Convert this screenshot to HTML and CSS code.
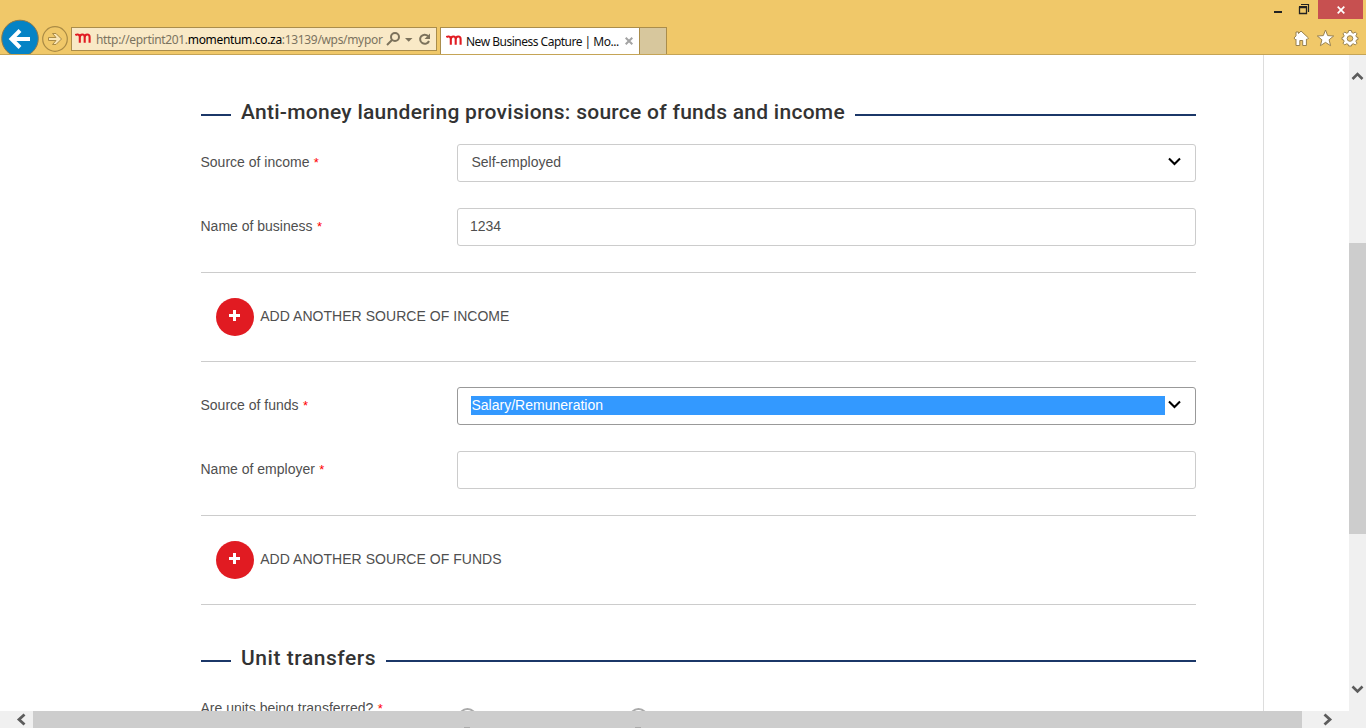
FILE: index.html
```html
<!DOCTYPE html>
<html lang="en">
<head>
<meta charset="utf-8">
<title>New Business Capture | Momentum</title>
<link rel="stylesheet" href="styles.css">
</head>
<body>
<div class="window">
  <header class="chrome">
    <div class="nav">
      <svg class="nav-icons" width="71" height="54" viewBox="0 0 71 54">
        <circle cx="20" cy="38.5" r="18.3" fill="#0583c5" stroke="#8d7a4c" stroke-width="1"/>
        <path d="M30 39H12M20 30.500L11.500 39L20 47.500" fill="none" stroke="#fff" stroke-width="4"/>
        <circle cx="55" cy="39" r="12.300" fill="none" stroke="#aa8b45" stroke-width="1.200"/>
        <path d="M48.500 37.500H56L52.500 33.500H56L61.500 39L56 44.500H52.500L56 40.500H48.500Z" fill="#fae5b5" stroke="#aa8b45" stroke-width="1"/>
      </svg>
      <div class="address">
        <svg class="fav" width="17" height="11" viewBox="0 0 17 11"><path d="M.3 2.200Q1.500 1.200 3 1.500Q4.800 1.800 4.800 4V9.800M4.800 4.500Q5 1.500 7.300 1.500Q9.700 1.500 9.700 4V9.800M9.700 4.500Q9.900 1.500 12.200 1.500Q14.600 1.500 14.600 4V9.800" fill="none" stroke="#e11b22" stroke-width="2.100"/></svg>
        <span class="url">http://eprtint201.<b>momentum.co.za</b>:13139/wps/mypor</span>
        <svg class="tools" width="50" height="16" viewBox="0 0 50 16">
          <g fill="none" stroke="#7c725b" stroke-width="2"><circle cx="9" cy="6" r="4"/><path d="M6 9L1 14"/>
          <path d="M42 5A4.600 4.600 0 1 0 43 10"/></g>
          <path d="M19 7H26.500L22.700 10.800ZM44 2.500V8H38.500Z" fill="#7c725b"/>
        </svg>
      </div>
      <div class="tab">
        <svg class="fav" width="17" height="11" viewBox="0 0 17 11"><path d="M.3 2.200Q1.500 1.200 3 1.500Q4.800 1.800 4.800 4V9.800M4.800 4.500Q5 1.500 7.300 1.500Q9.700 1.500 9.700 4V9.800M9.700 4.500Q9.900 1.500 12.200 1.500Q14.600 1.500 14.600 4V9.800" fill="none" stroke="#e11b22" stroke-width="2.100"/></svg>
        <span class="tab-title">New Business Capture | Mo...</span>
        <svg class="tab-x" width="8" height="8" viewBox="0 0 8 8"><path d="M.7.700L7.300 7.300M7.300.700L.7 7.300" stroke="#a3a3a3" stroke-width="2"/></svg>
      </div>
      <div class="new-tab"></div>
    </div>
    <div class="right">
      <div class="controls">
        <svg width="44" height="18" viewBox="0 0 44 18"><path d="M0 11H8V13H0Z" fill="#222"/><path d="M25.500 7.500H32.500V13.500H25.500Z" fill="none" stroke="#222" stroke-width="1.300"/><path d="M25 6.500H33M27 4.500H34.500V12" fill="none" stroke="#222" stroke-width="1.200"/></svg>
        <div class="close"><svg width="8" height="8" viewBox="0 0 8 8"><path d="M.7.700L7.300 7.300M7.300.700L.7 7.300" stroke="#fff" stroke-width="1.700"/></svg></div>
      </div>
      <svg class="actions" width="68" height="18" viewBox="0 0 68 18">
        <g fill="#fff" stroke="#98814e" stroke-width="1">
          <path d="M1 9L3 6.900V3H5.500V4.600L8 2L15.500 9L14 10.700L13.400 10.200V16.500H9.700V11.500H6.800V16.500H3V10.200L2.300 10.700Z"/>
          <path d="M32.500 1L34.700 6.600L40.700 7L36.100 10.800L37.600 16.700L32.500 13.400L27.400 16.700L28.900 10.800L24.300 7L30.300 6.600Z"/>
          <path fill-rule="evenodd" d="M55.600 1.500H58.400L58.900 3.600L60.400 4.200L62.300 3.100L64 4.800L62.900 6.700L63.500 8.100L65 8.500V10.500L63.500 10.900L62.900 12.300L64 14.200L62.300 15.900L60.400 14.800L58.900 15.400L58.400 17H55.600L55.100 15.400L53.600 14.800L51.700 15.900L50 14.200L51.100 12.300L50.500 10.900L49 10.500V8.500L50.500 8.100L51.100 6.700L50 4.800L51.700 3.100L53.600 4.200L55.100 3.600ZM57 6.700A2.800 2.800 0 1 0 57 12.300A2.800 2.800 0 1 0 57 6.700Z"/>
        </g>
      </svg>
    </div>
  </header>

  <div class="viewport">
    <main class="page">
      <div class="form">
        <h2 class="heading"><span class="heading-text first">Anti-money laundering provisions: source of funds and income</span></h2>
        <div class="row">
          <label class="label">Source of income <i>*</i></label>
          <div class="field select"><span class="value">Self-employed</span><svg class="chev" width="13" height="9" viewBox="0 0 13 9"><path d="M1 1.500L6.500 7L12 1.500" fill="none" stroke="#000" stroke-width="2.100"/></svg></div>
        </div>
        <div class="row">
          <label class="label">Name of business <i>*</i></label>
          <div class="field">1234</div>
        </div>
        <div class="add">
          <span class="plus"></span><span class="add-text">ADD ANOTHER SOURCE OF INCOME</span>
        </div>
        <div class="row">
          <label class="label">Source of funds <i>*</i></label>
          <div class="field select focused"><span class="value">Salary/Remuneration</span><svg class="chev" width="13" height="9" viewBox="0 0 13 9"><path d="M1 1.500L6.500 7L12 1.500" fill="none" stroke="#000" stroke-width="2.100"/></svg></div>
        </div>
        <div class="row">
          <label class="label">Name of employer <i>*</i></label>
          <div class="field"></div>
        </div>
        <div class="add">
          <span class="plus"></span><span class="add-text">ADD ANOTHER SOURCE OF FUNDS</span>
        </div>
        <h2 class="heading second-heading"><span class="heading-text second">Unit transfers</span></h2>
        <div class="question">
          <span class="label">Are units being transferred? <i>*</i></span>
          <span class="radio"></span><span class="radio"></span>
        </div>
      </div>
    </main>
    <div class="vbar">
      <svg width="17" height="17" viewBox="0 0 17 17"><path d="M3.500 10L8.500 5L13.500 10" fill="none" stroke="#5c5c5c" stroke-width="2.600"/></svg>
      <div class="vthumb"></div>
      <svg width="17" height="17" viewBox="0 0 17 17"><path d="M3.500 5.500L8.500 10.500L13.500 5.500" fill="none" stroke="#5c5c5c" stroke-width="2.600"/></svg>
    </div>
  </div>
  <div class="hbar">
    <svg width="33" height="17" viewBox="0 0 33 17"><path d="M24.500 3.500L19 8.500L24.500 13.500" fill="none" stroke="#5c5c5c" stroke-width="2.800"/></svg>
    <div class="hthumb"></div>
    <svg width="64" height="17" viewBox="0 0 64 17"><path d="M22.500 3.500L28 8.500L22.500 13.500" fill="none" stroke="#5c5c5c" stroke-width="2.800"/></svg>
  </div>
</div>
</body>
</html>
```
FILE: styles.css
```css
* { box-sizing: border-box; }
body { margin: 0; overflow: hidden; font: 14px/20px "Liberation Sans", Arial, sans-serif; color: #4f4f4f; }
svg { display: block; flex: none; }
.window { width: 1366px; height: 728px; display: flex; flex-direction: column; background: #fff; }

/* browser chrome */
.chrome { height: 55px; flex: none; display: flex; justify-content: space-between; background: #f0c869; border-bottom: 1px solid #c5a456; font-family: "Noto Sans", sans-serif; font-size: 12px; }
.nav { display: flex; align-items: flex-end; }
.address { width: 366px; height: 24px; margin: 0 3px 3px 0; padding-left: 3px; display: flex; align-items: center; background: #f9e9c6; border: 1px solid #aa8d4b; color: #7b735f; }
.address .fav { margin-bottom: 2px; }
.url { width: 286px; margin: 2px 0 0 4px; letter-spacing: -.33px; white-space: nowrap; }
.url b { font-weight: 400; color: #000; }
.tools { margin-left: 4px; }
.tab { width: 200px; height: 27px; padding-left: 5px; display: flex; align-items: center; background: #fff; border: 1px solid #aa8d4b; border-bottom: 0; color: #111; }
.tab .fav { margin-bottom: 1px; }
.tab-title { width: 155px; margin: 2px 0 0 3px; white-space: nowrap; letter-spacing: -.5px; }
.tab-x { margin-left: 4px; }
.new-tab { width: 27px; height: 27px; background: #d7c79d; border: 1px solid #aa8d4b; border-width: 1px 1px 0 0; }
.right { width: 92px; }
.controls { display: flex; }
.close { width: 45px; height: 19px; display: grid; place-items: center; background: #c75050; }
.actions { margin: 10px 0 0 19px; }

/* document */
.viewport { height: 656px; display: flex; }
.page { width: 1264px; border-right: 1px solid #ddd; overflow: hidden; padding: 43px 67px 0 201px; }
.heading { height: 30px; margin: 0 0 16px; display: flex; align-items: center; gap: 10px; color: #333; font: 500 21px/30px Roboto, sans-serif; }
.heading::before, .heading::after { content: ""; height: 2px; background: #1b3768; margin-top: 4px; }
.heading::before { width: 30px; }
.heading::after { flex: 1; }
.heading-text { white-space: nowrap; margin-top: -2px; }
.first { width: 604px; letter-spacing: .27px; }
.second { width: 135px; letter-spacing: .55px; }
.row { display: flex; height: 38px; margin-bottom: 26px; }
.label { width: 256px; padding-top: 8px; white-space: nowrap; margin-left: -.5px; }
.label i { color: #f00; font-style: normal; font-size: 13px; margin-left: .5px; }
.field { width: 739px; height: 38px; border: 1px solid #ccc; border-radius: 3px; padding: 7px 12.5px; }
.select { display: flex; padding: 8px 14px 0 13px; justify-content: space-between; }
.value { width: 694px; height: 19px; line-height: 18px; padding-left: 1px; }
.chev { margin-top: 4px; }
.focused { border-color: #999; }
.focused .value { background: #39f; color: #fff; }
.add { height: 90px; margin-bottom: 25px; display: flex; align-items: center; padding-left: 15px; border: 1px solid #ccc; border-width: 1px 0; }
.plus { width: 38px; height: 38px; border-radius: 50%; background: linear-gradient(#fff, #fff) 13px 16px / 11px 3px no-repeat, linear-gradient(#fff, #fff) 17px 12px / 3px 11px no-repeat, #e11b22; }
.add-text { margin: -2px 0 0 6.2px; letter-spacing: .04px; }
.second-heading { margin-top: 39px; margin-bottom: 24px; }
.question { display: flex; height: 20px; }
.question .label { width: 257px; padding: 0; }
.radio { width: 19px; height: 19px; margin: 10px 152px 0 0; border: 2px solid #aaa; border-radius: 50%; flex: none; }

/* scrollbars */
.vbar { width: 17px; margin-left: 85px; padding: 14px 0 13px; display: flex; flex-direction: column; background: #f0f0f0; }
.vthumb { height: 291px; margin: 157px 0 auto; background: #cdcdcd; }
.hbar { height: 17px; display: flex; background: #f0f0f0; }
.hthumb { width: 1269px; background: linear-gradient(#aaa, #aaa) 431px 16px / 6px 1px no-repeat, linear-gradient(#aaa, #aaa) 602px 16px / 6px 1px no-repeat, #cdcdcd; }
```
